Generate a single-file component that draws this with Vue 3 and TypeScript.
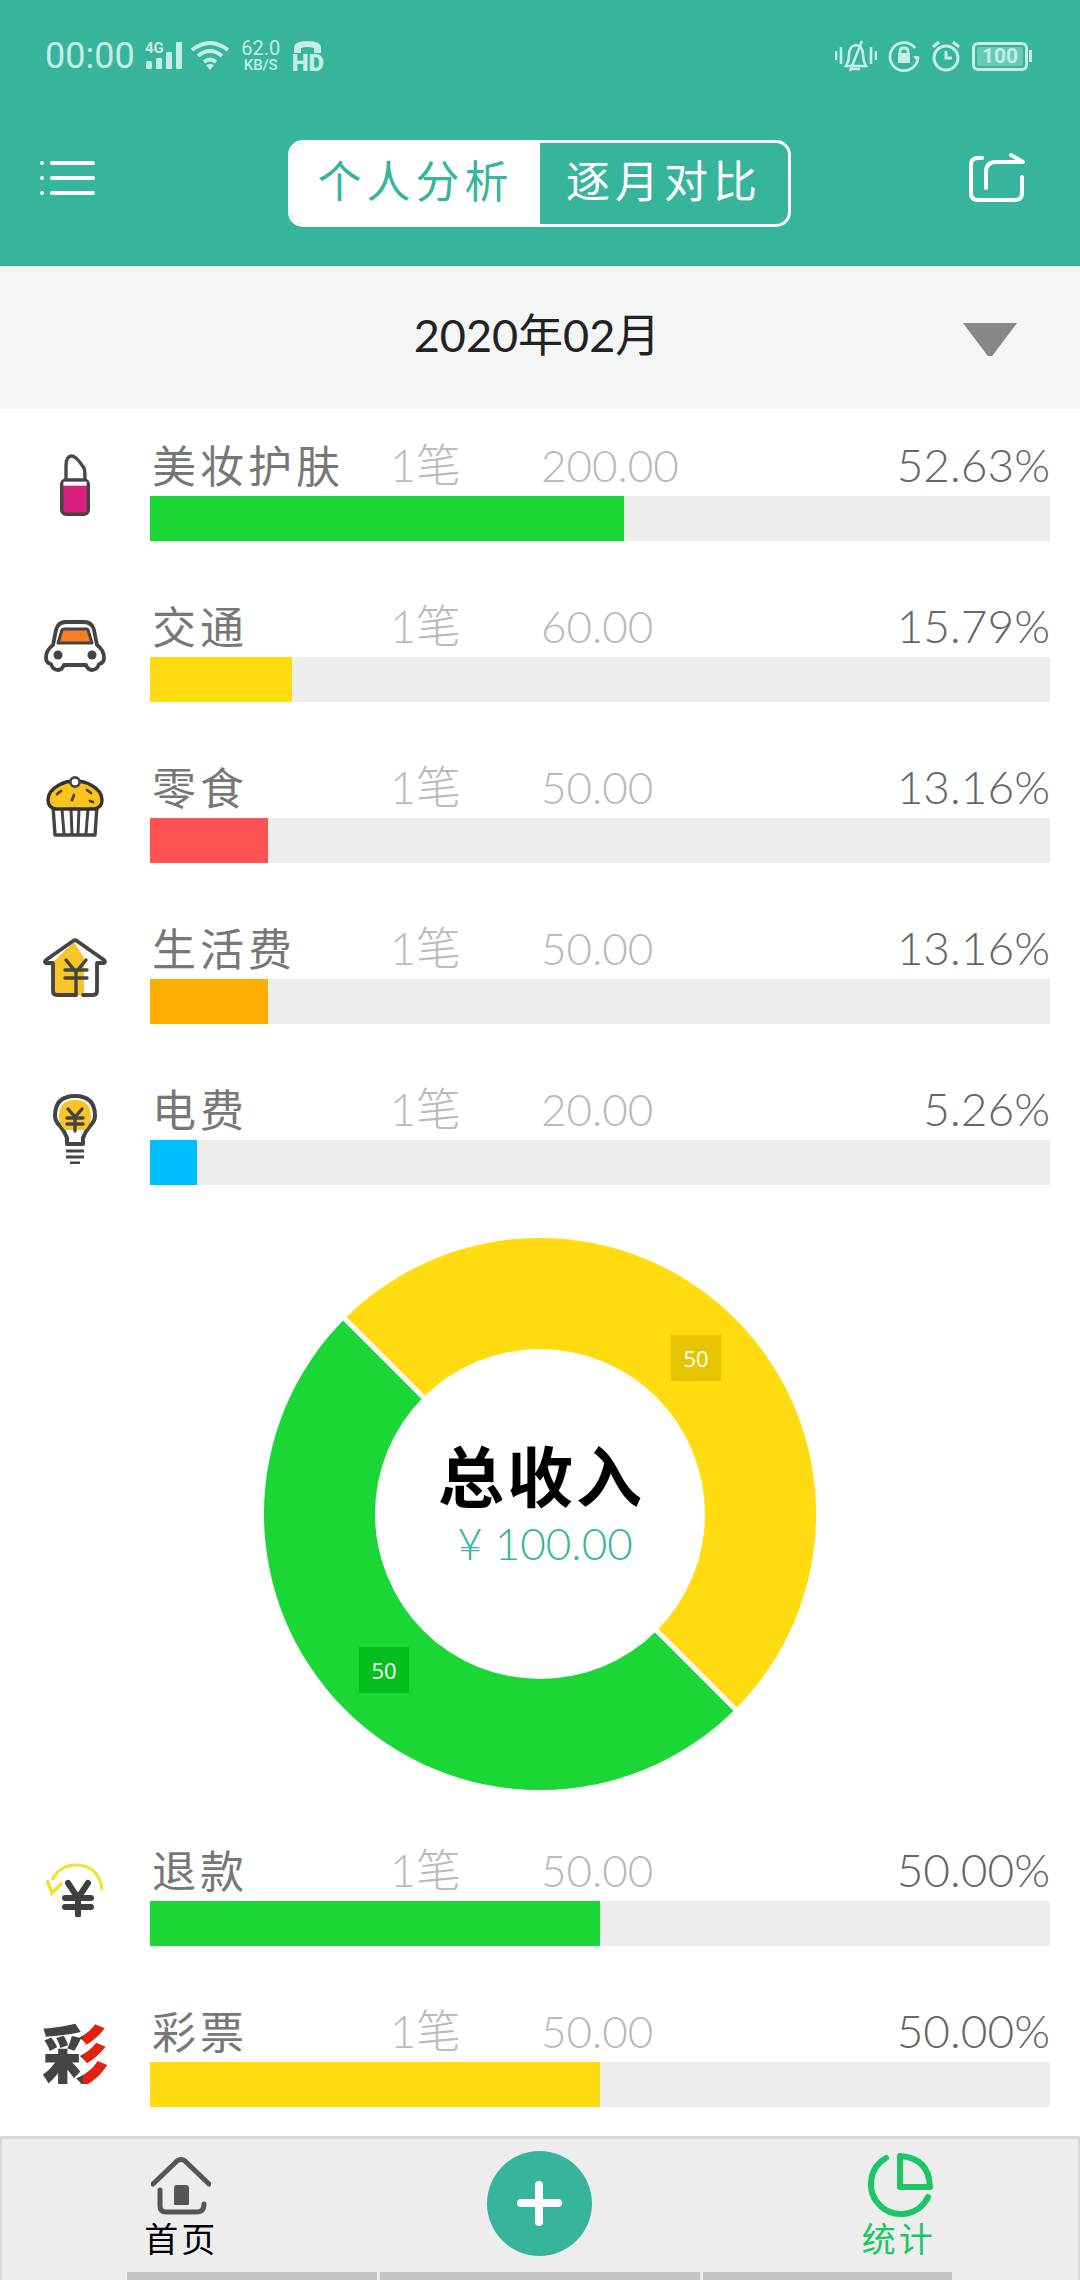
<script setup lang="ts">
interface Row {
  icon: string
  name: string
  count: string
  amount: string
  percent: string
  ratio: number
  color: string
}

const expenses: Row[] = [
  { icon: 'lipstick', name: '美妆护肤', count: '1笔', amount: '200.00', percent: '52.63%', ratio: 52.63, color: '#1ad736' },
  { icon: 'car', name: '交通', count: '1笔', amount: '60.00', percent: '15.79%', ratio: 15.79, color: '#ffdb0f' },
  { icon: 'muffin', name: '零食', count: '1笔', amount: '50.00', percent: '13.16%', ratio: 13.16, color: '#ff5252' },
  { icon: 'house', name: '生活费', count: '1笔', amount: '50.00', percent: '13.16%', ratio: 13.16, color: '#ffae00' },
  { icon: 'bulb', name: '电费', count: '1笔', amount: '20.00', percent: '5.26%', ratio: 5.26, color: '#00bfff' },
]

const incomes: Row[] = [
  { icon: 'refund', name: '退款', count: '1笔', amount: '50.00', percent: '50.00%', ratio: 50, color: '#1ad736' },
  { icon: 'lottery', name: '彩票', count: '1笔', amount: '50.00', percent: '50.00%', ratio: 50, color: '#ffdb0f' },
]
</script>

<template>
  <div class="page">
    <header class="header">
      <div class="status">
        <div class="status-left">
          <span class="time">00:00</span>
          <svg class="signal" width="38" height="30" viewBox="0 0 38 30">
            <text x="0" y="12" class="net">4G</text>
            <rect x="1" y="20" width="6" height="8" rx="1.5" />
            <rect x="11" y="17" width="6" height="11" rx="1" />
            <rect x="21" y="11" width="6" height="17" rx="1" />
            <rect x="31" y="1" width="6" height="27" rx="1" />
          </svg>
          <svg class="wifi" width="40" height="30" viewBox="0 0 40 30" fill="none" stroke="#c5ede5" stroke-width="4">
            <path d="M2 9 Q20 -5 38 9" />
            <path d="M8 15 Q20 5 32 15" />
            <path d="M14 21 Q20 16 26 21" />
            <path d="M20 29 L16 24 Q20 22 24 24 Z" fill="#c5ede5" stroke="none" />
          </svg>
          <div class="speed">
            <span class="speed-num">62.0</span>
            <span class="speed-unit">KB/S</span>
          </div>
          <div class="hd">
            <svg width="29" height="14" viewBox="0 0 29 14" fill="#c5ede5">
              <path d="M1 13 V8 Q1 1 14.5 1 Q28 1 28 8 V13 H21 V8 Q14.5 6 8 8 V13 Z" />
            </svg>
            <span>HD</span>
          </div>
        </div>
        <div class="status-right">
          <svg width="42" height="34" viewBox="0 0 42 34" fill="none" stroke="#c5ede5" stroke-width="2.6">
            <path d="M1 12 V21 M6 8 V25 M36 8 V25 M41 12 V21" />
            <path d="M11 27 Q14 22 14 16 Q14 7 21 6 Q28 7 28 16 Q28 22 31 27 Z" />
            <path d="M17 30 H25 M27 2 L15 32" />
          </svg>
          <svg width="32" height="32" viewBox="0 0 32 32" fill="none" stroke="#c5ede5" stroke-width="2.8">
            <path d="M27 8 A14 14 0 1 0 30 17" />
            <path d="M12 13 V11 Q12 8 16 8 Q20 8 20 11 V13" />
            <rect x="10" y="13" width="12" height="10" fill="#c5ede5" stroke="none" />
            <path d="M25 16 L31 16 L28 20 Z" fill="#c5ede5" stroke="none" />
          </svg>
          <svg width="30" height="32" viewBox="0 0 30 32" fill="none" stroke="#c5ede5" stroke-width="3">
            <circle cx="15" cy="18" r="12" />
            <path d="M15 11 V18 H21" />
            <path d="M2 7 L8 2 M28 7 L22 2" />
          </svg>
          <div class="battery">
            <div class="battery-box"><span>100</span></div>
            <i class="battery-nub"></i>
          </div>
        </div>
      </div>
      <div class="toolbar">
        <div class="menu-cell">
          <div class="menu">
            <div class="menu-line"><i></i><b></b></div>
            <div class="menu-line"><i></i><b></b></div>
            <div class="menu-line"><i></i><b></b></div>
          </div>
        </div>
        <div class="tabs">
          <div class="tab tab-on">个人分析</div>
          <div class="tab">逐月对比</div>
        </div>
        <div class="share-cell">
          <svg width="58" height="52" viewBox="0 0 58 52" fill="none" stroke="#fff" stroke-width="4" stroke-linecap="round" stroke-linejoin="round">
            <path d="M13 5 H9 Q2 5 2 12 V40 Q2 47 9 47 H46 Q53 47 53 40 V24" />
            <path d="M17 35 V19 Q17 9 27 9 H54 L42 2" />
          </svg>
        </div>
      </div>
    </header>

    <div class="datebar">
      <span class="date">2020年02月</span>
      <span class="arrow"></span>
    </div>

    <section class="list">
      <div v-for="row in expenses" :key="row.name" class="row">
        <div class="icon-cell">
          <svg v-if="row.icon === 'lipstick'" width="30" height="62" viewBox="0 0 30 62">
            <path d="M6 26 V12 Q6 2 12 2 Q16 2 24 14 Q25 16 25 26" fill="#fff" stroke="#4a4a4a" stroke-width="3.4" />
            <rect x="1.7" y="26" width="26.6" height="34.3" rx="4.5" fill="#d81f7d" stroke="#444" stroke-width="3.4" />
            <rect x="3.4" y="27.7" width="23.2" height="4" fill="#fff" />
          </svg>
          <svg v-else-if="row.icon === 'car'" width="62" height="52" viewBox="0 0 62 52">
            <path d="M9 25 L12 10 Q14 2 22 2 H40 Q48 2 50 10 L53 25 Q60 30 60 38 Q60 43 55 44 Q53 50 48 50 Q44 50 42 45 H20 Q18 50 14 50 Q9 50 7 44 Q2 43 2 38 Q2 30 9 25 Z" fill="#fff" stroke="#444" stroke-width="3.8" stroke-linejoin="round" />
            <path d="M14 23 L18 10 Q19 9 21 9 H42 Q44 9 44 10 L48 23 Z" fill="#fb7d23" stroke="#444" stroke-width="3" stroke-linejoin="round" />
            <circle cx="14" cy="35" r="4.5" fill="#444" />
            <circle cx="48" cy="35" r="4.5" fill="#444" />
          </svg>
          <svg v-else-if="row.icon === 'muffin'" width="58" height="62" viewBox="0 0 58 62">
            <path d="M7 30 L9 59 H49 L51 30" fill="#fff" stroke="#444" stroke-width="3.4" stroke-linejoin="round" />
            <path d="M16 33 L18 58 M25 33 L26 58 M33 33 L32 58 M42 33 L40 58" stroke="#444" stroke-width="3" />
            <path d="M10 33 Q2 32 2 24 Q2 15 13 9 Q20 5 29 5 Q38 5 45 9 Q56 15 56 24 Q56 32 48 33 Z" fill="#f7c41f" stroke="#333" stroke-width="3.4" stroke-linejoin="round" />
            <circle cx="29" cy="6" r="4.6" fill="#fff" stroke="#444" stroke-width="2.6" />
            <path d="M11 18 L15 15 M26 24 L28 19 M41 14 L45 17 M44 25 L47 26" stroke="#5a3a12" stroke-width="2.8" stroke-linecap="round" />
          </svg>
          <svg v-else-if="row.icon === 'house'" width="64" height="60" viewBox="0 0 64 60">
            <path d="M10 24 L31 4 L41 20 V57 H14 Q10 57 10 53 Z" fill="#f5c52a" />
            <path d="M10 25 V53 Q10 57 14 57 H33 M40 57 H50 Q54 57 54 53 V25 H61 Q63 24 61 22 L34 3 Q32 1.6 30 3 L3 22 Q1 24 3 25 H10" fill="none" stroke="#444" stroke-width="3.8" stroke-linecap="round" stroke-linejoin="round" />
            <path d="M23 22 L33 34 L43 22 M22 32 H44 M22 40 H44 M33 34 V57" fill="none" stroke="#444" stroke-width="3.4" stroke-linecap="round" />
          </svg>
          <svg v-else-if="row.icon === 'bulb'" width="44" height="70" viewBox="0 0 44 70">
            <path d="M14 50 V44 Q12 38 7 32 Q2 27 2 22 Q2 2 22 2 Q42 2 42 22 Q42 27 37 32 Q32 38 30 44 V50 Z" fill="#fff" stroke="#444" stroke-width="4" stroke-linejoin="round" />
            <path d="M6 22 Q6 6 22 6 Q38 6 38 22 Q38 30 32 36 H12 Q6 30 6 22 Z" fill="#f5c52a" />
            <path d="M15 15 L22 23 L29 15 M14 24 H30 M14 30 H30 M22 23 V37" fill="none" stroke="#444" stroke-width="3.4" stroke-linecap="round" />
            <path d="M13 57 H31 M13 63 H31 M17 69 H27" stroke="#444" stroke-width="3" />
          </svg>
        </div>
        <div class="row-body">
          <div class="row-text">
            <span class="name">{{ row.name }}</span>
            <span class="count">{{ row.count }}</span>
            <span class="amount">{{ row.amount }}</span>
            <span class="percent">{{ row.percent }}</span>
          </div>
          <div class="track">
            <div class="fill" :style="{ width: row.ratio + '%', background: row.color }"></div>
          </div>
        </div>
      </div>
    </section>

    <section class="chart">
      <svg width="556" height="556" viewBox="0 0 556 556">
        <path d="M82.8 82.8 A276 276 0 0 1 473.2 473.2 L394.7 394.7 A165 165 0 0 0 161.3 161.3 Z" fill="#ffdb0f" />
        <path d="M473.2 473.2 A276 276 0 0 1 82.8 82.8 L161.3 161.3 A165 165 0 0 0 394.7 394.7 Z" fill="#1ad736" />
        <path d="M82 82 L162 162 M474 474 L394 394" stroke="#fff" stroke-width="5" />
      </svg>
      <span class="tag tag-yellow">50</span>
      <span class="tag tag-green">50</span>
      <div class="chart-center">
        <div class="chart-title">总收入</div>
        <div class="chart-money">¥ 100.00</div>
      </div>
    </section>

    <section class="list list-income">
      <div v-for="row in incomes" :key="row.name" class="row">
        <div class="icon-cell">
          <svg v-if="row.icon === 'refund'" width="58" height="54" viewBox="0 0 58 54">
            <path d="M56 27 Q53 2 30 2 Q14 2 6 17" fill="none" stroke="#f2e22a" stroke-width="3" />
            <path d="M1 17 L6 30 L16 20" fill="none" stroke="#f2e22a" stroke-width="3.4" />
            <path d="M22 20 L32 35 L42 20 M19 35 H45 M19 44 H45 M32 35 V52" fill="none" stroke="#3f3f41" stroke-width="6" stroke-linecap="round" />
          </svg>
          <span v-else class="lottery">彩</span>
        </div>
        <div class="row-body">
          <div class="row-text">
            <span class="name">{{ row.name }}</span>
            <span class="count">{{ row.count }}</span>
            <span class="amount">{{ row.amount }}</span>
            <span class="percent">{{ row.percent }}</span>
          </div>
          <div class="track">
            <div class="fill" :style="{ width: row.ratio + '%', background: row.color }"></div>
          </div>
        </div>
      </div>
    </section>

    <nav class="nav">
      <div class="nav-item">
        <svg width="60" height="58" viewBox="0 0 60 58" fill="none" stroke="#555" stroke-width="5" stroke-linecap="round" stroke-linejoin="round">
          <path d="M2 27 L26 4 Q30 1 34 4 L58 27" />
          <path d="M9 33 V49 Q9 55 15 55 H46 Q53 55 53 47" />
          <path d="M24 47 V31 Q24 29 26 29 H35 Q37 29 37 31 V47 Z" fill="#555" stroke-width="2" />
        </svg>
        <span class="nav-label">首页</span>
      </div>
      <div class="nav-item nav-plus">
        <div class="plus"><i></i><b></b></div>
      </div>
      <div class="nav-item nav-on">
        <svg width="68" height="68" viewBox="0 0 68 68" fill="none" stroke="#1bc765" stroke-width="6" stroke-linecap="round" stroke-linejoin="round">
          <path d="M21 6 A30 30 0 1 0 63 45" />
          <path d="M35 4 Q64 6 65 35 H35 Z" />
        </svg>
        <span class="nav-label">统计</span>
      </div>
      <i class="edge edge-a"></i>
      <i class="edge edge-b"></i>
      <i class="edge edge-c"></i>
    </nav>
  </div>
</template>

<style scoped>
.page {
  width: 1080px;
  height: 2280px;
  overflow: hidden;
  background: #fff;
  display: flex;
  flex-direction: column;
  font-family: Lato, "Noto Sans CJK SC", sans-serif;
}
.header {
  height: 266px;
  background: #36b59c;
  display: flex;
  flex-direction: column;
}
.status {
  height: 112px;
  padding: 0 48px 0 45px;
  display: flex;
  justify-content: space-between;
  align-items: center;
  color: #c5ede5;
  font-family: Roboto, sans-serif;
}
.status-left {
  display: flex;
  align-items: center;
}
.time {
  font-size: 36px;
  font-weight: 400;
  line-height: 40px;
  margin-right: 10px;
}
.signal {
  fill: #c5ede5;
  margin-right: 7px;
  overflow: visible;
}
.net {
  font: 700 15px Roboto, sans-serif;
}
.wifi {
  margin-right: 11px;
}
.speed {
  display: flex;
  flex-direction: column;
  align-items: center;
  width: 40px;
  margin-right: 11px;
}
.speed-num {
  font-size: 20px;
  line-height: 18px;
}
.speed-unit {
  font-size: 15px;
  font-weight: 500;
  line-height: 16px;
}
.hd {
  display: flex;
  flex-direction: column;
  align-items: center;
  font-size: 24px;
  font-weight: 900;
  line-height: 18px;
}
.status-right {
  display: flex;
  align-items: center;
  gap: 11px;
}
.battery {
  display: flex;
  align-items: center;
  gap: 1px;
}
.battery-box {
  width: 56px;
  height: 29px;
  box-sizing: border-box;
  border: 3px solid #c5ede5;
  border-radius: 6px;
  padding: 2px;
  display: flex;
}
.battery-box span {
  flex: 1;
  background: rgba(197, 237, 229, 0.35);
  border-radius: 2px;
  font-size: 21px;
  font-weight: 700;
  line-height: 19px;
  text-align: center;
}
.battery-nub {
  width: 3px;
  height: 12px;
  background: #c5ede5;
}
.toolbar {
  height: 87px;
  margin-top: 28px;
  display: grid;
  grid-template-columns: 1fr 503px 1fr;
  padding-right: 1px;
  align-items: center;
}
.menu-cell {
  padding: 0 0 11px 40px;
}
.menu {
  width: 55px;
  display: flex;
  flex-direction: column;
  gap: 11px;
}
.menu-line {
  display: flex;
  justify-content: space-between;
}
.menu-line i {
  width: 4px;
  height: 4px;
  border-radius: 2px;
  background: #fff;
}
.menu-line b {
  width: 45px;
  height: 4px;
  border-radius: 2px;
  background: #fff;
}
.share-cell {
  display: flex;
  justify-content: flex-end;
  padding: 0 52px 10px 0;
}
.tabs {
  display: flex;
  height: 87px;
  box-sizing: border-box;
  border: 3px solid #fff;
  border-radius: 15px;
  overflow: hidden;
}
.tab {
  flex: 1;
  display: flex;
  align-items: center;
  justify-content: center;
  padding-bottom: 9px;
  box-sizing: border-box;
  font-size: 44px;
  letter-spacing: 5px;
  color: #fff;
  font-family: "Noto Sans CJK SC", sans-serif;
}
.tab-on {
  flex: 0 0 249px;
  background: #fff;
  color: #36b59c;
}
.datebar {
  height: 143px;
  background: #f4f5f5;
  position: relative;
  display: flex;
  align-items: center;
  justify-content: center;
  padding-bottom: 10px;
  box-sizing: border-box;
}
.date {
  font-size: 45px;
  color: #222;
  margin-right: 6px;
  font-weight: 400;
}
.arrow {
  position: absolute;
  left: 963px;
  top: 57px;
  width: 54px;
  height: 33px;
  background: #888;
  clip-path: polygon(0 0, 100% 0, 54% 100%, 46% 100%);
}
.list {
  padding-top: 31px;
  display: flex;
  flex-direction: column;
  gap: 60px;
}
.list-income {
  padding-top: 55px;
}
.row {
  display: flex;
  height: 101px;
}
.icon-cell {
  width: 150px;
  flex: none;
  display: flex;
  align-items: center;
  justify-content: center;
  padding-bottom: 12px;
  box-sizing: border-box;
}
.lottery {
  font-family: "Noto Sans CJK SC", sans-serif;
  font-size: 66px;
  font-weight: 900;
  line-height: 66px;
  color: transparent;
  background: linear-gradient(90deg, #444 62%, #e2200e 62%);
  -webkit-background-clip: text;
  background-clip: text;
}
.row-body {
  width: 900px;
  display: flex;
  flex-direction: column;
}
.row-text {
  height: 56px;
  display: grid;
  grid-template-columns: 240px 151px 1fr auto;
  align-items: start;
  font-size: 45px;
  font-weight: 300;
  line-height: 50px;
}
.name {
  font-family: "Noto Sans CJK SC", sans-serif;
  font-size: 44px;
  letter-spacing: 4px;
  padding-left: 2px;
  color: #777;
  font-weight: 400;
  line-height: 48px;
}
.count {
  color: #bbb;
}
.amount {
  color: #b9b9b9;
  font-size: 44px;
}
.percent {
  color: #666;
  font-size: 46px;
}
.track {
  height: 45px;
  background: #ededed;
}
.fill {
  height: 100%;
}
.chart {
  margin-top: 53px;
  height: 552px;
  position: relative;
  display: flex;
  justify-content: center;
}
.chart svg {
  margin-top: -2px;
}
.tag {
  position: absolute;
  width: 50px;
  height: 46px;
  color: #fff;
  font-family: "Open Sans", sans-serif;
  font-size: 22px;
  line-height: 46px;
  text-align: center;
}
.tag-yellow {
  left: 671px;
  top: 97px;
  background: #e6c500;
}
.tag-green {
  left: 359px;
  top: 409px;
  background: #05bf1e;
}
.chart-center {
  position: absolute;
  left: 0;
  right: 0;
  top: 199px;
  display: flex;
  flex-direction: column;
  align-items: center;
}
.chart-title {
  font-family: "Noto Sans CJK SC", sans-serif;
  font-size: 66px;
  font-weight: 700;
  letter-spacing: 3px;
  padding-left: 3px;
  line-height: 72px;
  color: #000;
}
.chart-money {
  font-size: 44px;
  line-height: 62px;
  font-weight: 300;
  margin: 3px 0 0 10px;
  color: #36b59c;
}
.nav {
  margin-top: 29px;
  height: 144px;
  box-sizing: border-box;
  background: #ededed;
  border-top: 3px solid #d8d8d8;
  border-left: 2px solid #d8d8d8;
  border-right: 2px solid #d8d8d8;
  display: grid;
  grid-template-columns: 1fr 1fr 1fr;
  position: relative;
}
.nav-item {
  display: flex;
  flex-direction: column;
  align-items: center;
  padding-top: 18px;
}
.nav-label {
  font-family: "Noto Sans CJK SC", sans-serif;
  font-size: 34px;
  letter-spacing: 3px;
  line-height: 40px;
  margin-top: 3px;
  color: #000;
}
.nav-on {
  padding-top: 13px;
}
.nav-on .nav-label {
  color: #1bc765;
  margin-top: -2px;
}
.plus {
  width: 105px;
  height: 105px;
  margin-top: -6px;
  border-radius: 50%;
  background: #36b59c;
  position: relative;
}
.plus i,
.plus b {
  position: absolute;
  background: #fff;
  border-radius: 4px;
}
.plus i {
  left: 30px;
  top: 48px;
  width: 45px;
  height: 8px;
}
.plus b {
  left: 48px;
  top: 30px;
  width: 8px;
  height: 45px;
}
.edge {
  position: absolute;
  bottom: 0;
  height: 8px;
  background: #c4c4c4;
}
.edge-a {
  left: 125px;
  width: 250px;
}
.edge-b {
  left: 378px;
  width: 320px;
}
.edge-c {
  left: 701px;
  width: 249px;
}
</style>
